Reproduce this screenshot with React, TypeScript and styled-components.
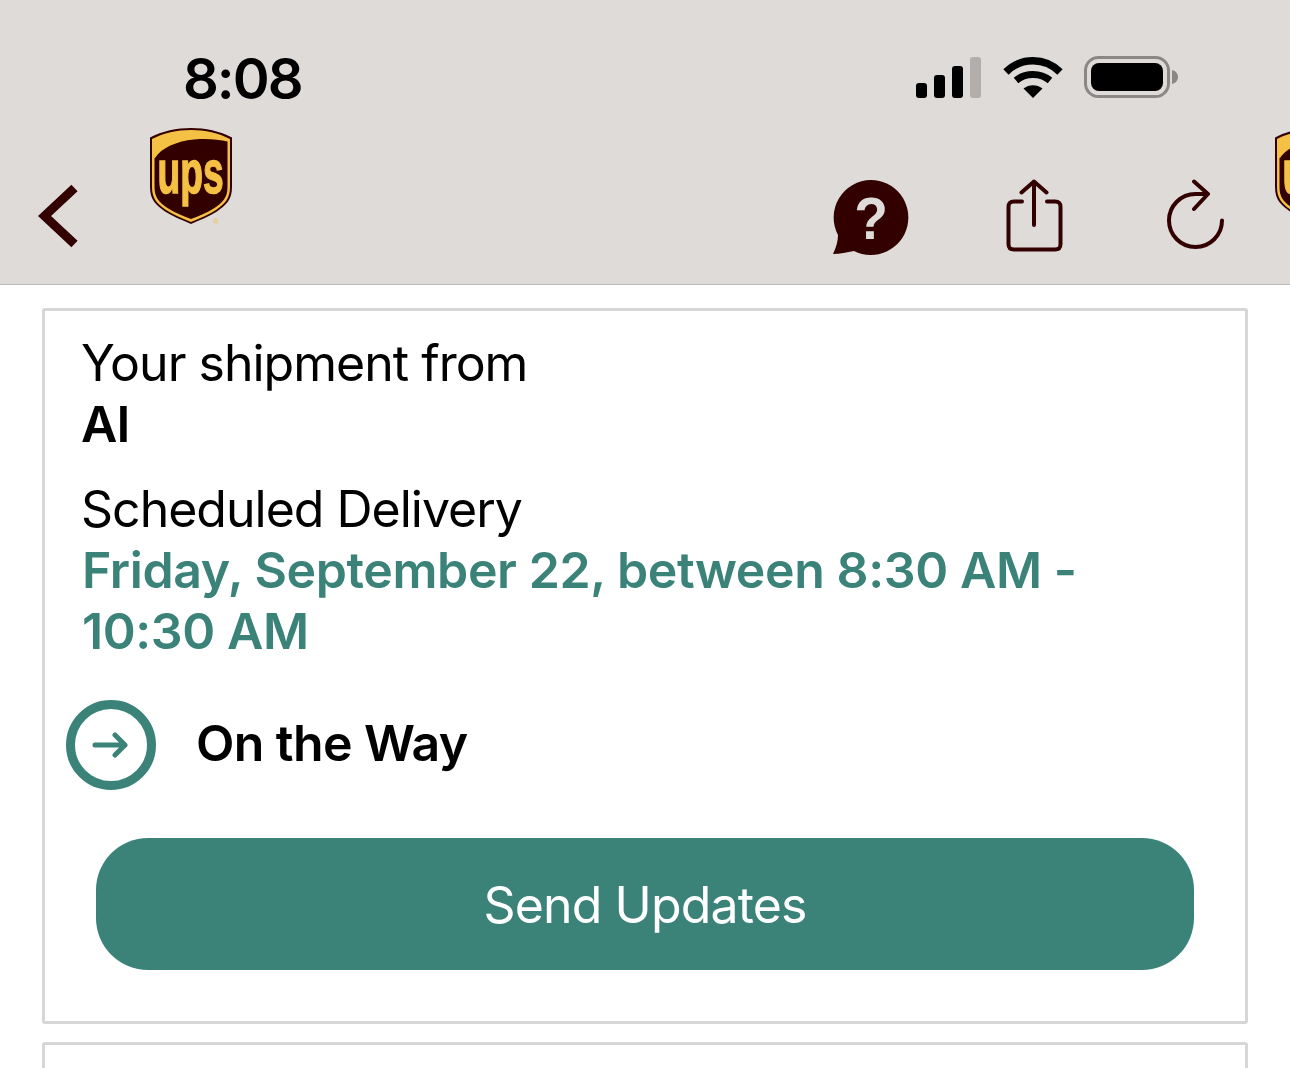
import styled, { createGlobalStyle } from "styled-components"

const BROWN = "#330000"
const GOLD = "#f5c144"
const TEAL = "#3b8279"

const GlobalStyle = createGlobalStyle`
  html, body {
    margin: 0;
    padding: 0;
    background: #fff;
    overflow: hidden;
  }

  body {
    font-family: Inter, "Liberation Sans", sans-serif;
  }
`

function UpsLogo({ className }: { className?: string }) {
  return (
    <svg className={className} viewBox="0 0 82 98" width="82" height="98">
      <path
        d="M41 0C27 0 12 3 0 9.500V59C0 72 6 77 15 83.500C23 88.500 32 92 41 96C50 92 59 88.500 67 83.500C76 77 82 72 82 59V9.500C70 3 55 0 41 0Z"
        fill={BROWN}
      />
      <path
        d="M41 2C27 2 13.500 5 2 11V59C2 71 7.500 76 16 82C24 87 32 90.500 41 94C50 90.500 58 87 66 82C74.500 76 80 71 80 59V11C68.500 5 55 2 41 2ZM5 30C11 20 27 13 44 11.500C57 10.500 69 11.500 77.500 13.500V59C77.500 70 72.500 74.500 64.500 80C56.500 85 49 88 41 91C33 88 25.500 85 17.500 80C9.500 74.500 4.500 70 4.500 59V30Z"
        fill={GOLD}
        fillRule="evenodd"
      />
      <text
        transform="translate(7.500 65) scale(0.6 1)"
        fontFamily="Liberation Sans, sans-serif"
        fontWeight="700"
        fontSize="62"
        fill={GOLD}
        stroke={GOLD}
        strokeWidth="1.500"
      >
        ups
      </text>
      <text x="63" y="96" fontFamily="Liberation Sans, sans-serif" fontSize="8" fill={GOLD}>
        ®
      </text>
    </svg>
  )
}

export default function App() {
  return (
    <Page>
      <GlobalStyle />
      <Header>
        <StatusBar>
          <Time>8:08</Time>
          <StatusIcons>
            <svg width="65" height="42" viewBox="0 0 65 42">
              <rect x="0" y="26" width="11" height="15" rx="3" fill="#000" />
              <rect x="18" y="18" width="11" height="23" rx="3" fill="#000" />
              <rect x="36" y="9" width="11" height="32" rx="3" fill="#000" />
              <rect x="54" y="0" width="11" height="41" rx="3" fill="#b1aeac" />
            </svg>
            <WifiIcon width="60" height="42" viewBox="0 0 60 42">
              <path d="M30 41 20.500 31.500C26 27 34 27 39.500 31.500Z" fill="#000" />
              <path d="M13 23.500C22.500 15.500 37.500 15.500 47 23.500" fill="none" stroke="#000" strokeWidth="7" />
              <path d="M3 15C18 0 42 0 57 15" fill="none" stroke="#000" strokeWidth="7.500" />
            </WifiIcon>
            <BatteryIcon width="95" height="44" viewBox="0 0 95 44">
              <rect x="1.500" y="1.500" width="83" height="39" rx="13" fill="none" stroke="#8a8886" strokeWidth="3" />
              <rect x="7" y="7" width="72" height="28" rx="8" fill="#000" />
              <path d="M88 14C92 15 94 18 94 21C94 24 92 27 88 28Z" fill="#8a8886" />
            </BatteryIcon>
          </StatusIcons>
        </StatusBar>
        <NavBar>
          <BackIcon width="42" height="68" viewBox="0 0 42 68">
            <path d="M36.500 6 6.500 34 36.500 62" fill="none" stroke={BROWN} strokeWidth="9" />
          </BackIcon>
          <BrandLogo />
          <Actions>
            <svg width="76" height="76" viewBox="0 0 76 76">
              <path
                d="M38 1A37.500 37.500 0 1 1 21 72C14 73 7 75 0 75C3 69 5 62 5 56A37.500 37.500 0 0 1 38 1Z"
                fill={BROWN}
              />
              <text
                transform="translate(38 60) scale(0.92 1)"
                textAnchor="middle"
                fontFamily="Liberation Sans, sans-serif"
                fontWeight="700"
                fontSize="60"
                fill="#dedbd9"
              >
                ?
              </text>
            </svg>
            <ShareIcon width="58" height="73" viewBox="0 0 58 73">
              <path
                d="M16 22.500H8C4 22.500 2.500 24 2.500 28V65C2.500 69 4 70.500 8 70.500H49C53 70.500 54.500 69 54.500 65V28C54.500 24 53 22.500 49 22.500H41"
                fill="none"
                stroke={BROWN}
                strokeWidth="4"
                strokeLinecap="round"
              />
              <path
                d="M28 46V2.500M15.500 13.500 28 2.500 40.500 13.500"
                fill="none"
                stroke={BROWN}
                strokeWidth="4"
                strokeLinecap="round"
                strokeLinejoin="round"
              />
            </ShareIcon>
            <RefreshIcon width="58" height="71" viewBox="0 0 58 71">
              <path
                d="M55 41.500A26.500 26.500 0 1 1 28.500 15H39"
                fill="none"
                stroke={BROWN}
                strokeWidth="4"
                strokeLinecap="round"
              />
              <path
                d="M27 2.500 41 15 27 30"
                fill="none"
                stroke={BROWN}
                strokeWidth="4"
                strokeLinecap="round"
                strokeLinejoin="round"
              />
            </RefreshIcon>
          </Actions>
          <ClippedLogo />
        </NavBar>
      </Header>

      <Card>
        <Line>Your shipment from</Line>
        <Line $bold>AI</Line>
        <DeliveryLabel>Scheduled Delivery</DeliveryLabel>
        <DeliveryTime>Friday, September 22, between 8:30 AM - 10:30 AM</DeliveryTime>
        <StatusRow>
          <StatusCircle>
            <ArrowIcon width="36" height="26" viewBox="0 0 36 26">
              <path
                d="M3 13H33M23 3 33 13 23 23"
                fill="none"
                stroke={TEAL}
                strokeWidth="5"
                strokeLinecap="round"
                strokeLinejoin="round"
              />
            </ArrowIcon>
          </StatusCircle>
          <StatusText>On the Way</StatusText>
        </StatusRow>
        <SendButton>Send Updates</SendButton>
      </Card>
      <NextCard />
    </Page>
  )
}

const Page = styled.div`
  width: 1290px;
  height: 1068px;
  overflow: hidden;
  background: #fff;
`

const Header = styled.header`
  height: 284px;
  background: #dedbd9;
  border-bottom: 1px solid #bdbbb9;
  overflow: hidden;
`

const StatusBar = styled.div`
  height: 128px;
  box-sizing: border-box;
  padding: 49px 111px 0 183px;
  display: flex;
  justify-content: space-between;
  align-items: flex-start;
`

const Time = styled.div`
  font-size: 56px;
  line-height: 60px;
  font-weight: 600;
  letter-spacing: -2px;
  color: #000;
`

const StatusIcons = styled.div`
  display: flex;
  align-items: flex-start;
  margin-top: 8px;
`

const WifiIcon = styled.svg`
  margin-left: 22px;
`

const BatteryIcon = styled.svg`
  margin-left: 21px;
  margin-top: -1px;
`

const NavBar = styled.div`
  display: flex;
  align-items: flex-start;
  padding-left: 38px;
`

const BackIcon = styled.svg`
  flex: none;
  margin-top: 54px;
`

const BrandLogo = styled(UpsLogo)`
  flex: none;
  margin-left: 70px;
`

const Actions = styled.div`
  flex: none;
  display: flex;
  align-items: flex-start;
  margin-left: 601px;
  margin-top: 51px;
`

const ShareIcon = styled.svg`
  margin-left: 97px;
`

const RefreshIcon = styled.svg`
  margin-left: 103px;
`

const ClippedLogo = styled(UpsLogo)`
  flex: none;
  margin-left: 50px;
`

const Card = styled.section`
  box-sizing: border-box;
  height: 716px;
  margin: 23px 42px 0;
  padding: 22px 36px 0;
  border: 3px solid #d6d6d6;
  border-radius: 3px;
`

const Line = styled.div<{ $bold?: boolean }>`
  font-size: 50px;
  line-height: 61px;
  font-weight: ${({ $bold }) => ($bold ? 600 : 400)};
  letter-spacing: ${({ $bold }) => ($bold ? "-1px" : "-1px")};
  color: #000;
`

const DeliveryLabel = styled(Line)`
  margin-top: 24px;
`

const DeliveryTime = styled(Line)`
  width: 1040px;
  margin-left: 1px;
  font-weight: 600;
  letter-spacing: -0.4px;
  color: ${TEAL};
`

const StatusRow = styled.div`
  display: flex;
  align-items: center;
  margin: 38px 0 0 -15px;
`

const StatusCircle = styled.div`
  box-sizing: border-box;
  width: 90px;
  height: 90px;
  border: 9px solid ${TEAL};
  border-radius: 50%;
  display: flex;
  align-items: center;
  justify-content: center;
`

const ArrowIcon = styled.svg`
  margin-right: 3px;
`

const StatusText = styled.div`
  margin: 0 0 4px 40px;
  font-size: 50px;
  font-weight: 600;
  letter-spacing: -0.6px;
  color: #000;
`

const SendButton = styled.button`
  display: block;
  box-sizing: border-box;
  width: 1098px;
  height: 132px;
  margin: 48px 0 0 15px;
  padding-top: 2px;
  border: none;
  border-radius: 52px;
  background: ${TEAL};
  color: #fff;
  font-family: inherit;
  font-size: 50px;
  font-weight: 400;
  letter-spacing: -0.85px;
`

const NextCard = styled.section`
  height: 60px;
  margin: 18px 42px 0;
  border: 3px solid #d6d6d6;
  border-radius: 3px;
`
